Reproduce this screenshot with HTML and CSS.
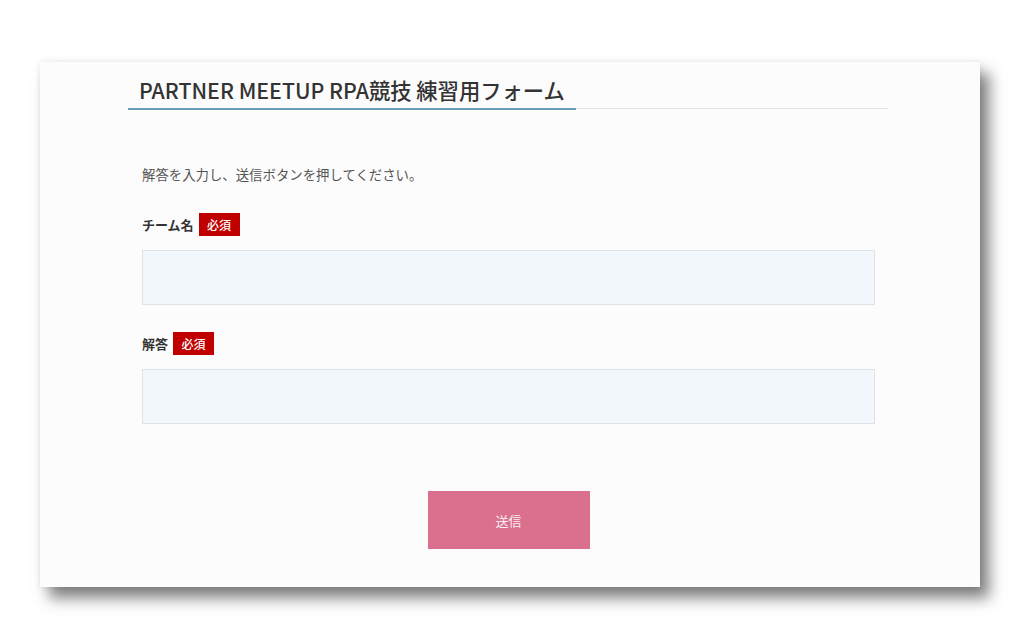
FILE: index.html
```html
<!DOCTYPE html>
<html lang="ja">
<head>
<meta charset="utf-8">
<title>PARTNER MEETUP RPA競技 練習用フォーム</title>
<link rel="stylesheet" href="styles.css">
</head>
<body>
<div class="page">
  <main class="panel">
    <header class="head">
      <h1 class="title">PARTNER MEETUP RPA競技 練習用フォーム</h1>
    </header>
    <form class="form">
      <p class="lead">解答を入力し、送信ボタンを押してください。</p>
      <div class="field">
        <label class="label">チーム名<span class="req">必須</span></label>
        <input class="input" type="text">
      </div>
      <div class="field second">
        <label class="label">解答<span class="req">必須</span></label>
        <input class="input" type="text">
      </div>
      <div class="actions">
        <button class="submit" type="button">送信</button>
      </div>
    </form>
  </main>
</div>
</body>
</html>
```
FILE: styles.css
```css
* { box-sizing: border-box; }
html, body { margin: 0; padding: 0; background: #ffffff; }
body {
  font-family: "Noto Sans CJK JP", "Noto Sans", sans-serif;
  color: #333;
}
.page {
  padding: 62px 0 49px 40px;
  min-height: 636px;
}
.panel {
  width: 940px;
  height: 525px;
  background: #fcfcfc;
  box-shadow: 0 0 6px rgba(0,0,0,0.08), 9px 11px 14px rgba(0,0,0,0.5);
  padding: 13px 92px 0 88px;
}
.head {
  display: flex;
  border-bottom: 1px solid #dde3e8;
  height: 34px;
}
.title {
  margin: 0 0 -1px 0;
  padding: 0 11px;
  font-size: 21.3px;
  line-height: 30px;
  font-weight: 500;
  color: #333;
  border-bottom: 2px solid #6a9fb9;
  height: 35px;
  letter-spacing: 0;
}
.form {
  padding: 0 13px 0 14px;
}
.lead {
  margin: 55px 0 0;
  font-size: 13.4px;
  line-height: 20px;
  color: #555;
}
.field { margin-top: 29px; }
.field.second { margin-top: 27px; }
.label {
  display: flex;
  align-items: center;
  height: 23px;
  font-size: 13px;
  font-weight: 700;
  color: #333;
}
.req {
  display: inline-flex;
  align-items: center;
  justify-content: center;
  margin-left: 5px;
  width: 41px;
  height: 23px;
  background: #c00000;
  color: #fff;
  font-size: 12px;
  font-weight: 500;
}
.input {
  display: block;
  margin-top: 14px;
  width: 733px;
  height: 55px;
  background: #f1f7fb;
  border: 1px solid #dde3e6;
  border-radius: 0;
  outline: none;
}
.actions {
  margin-top: 67px;
  display: flex;
  justify-content: center;
}
.submit {
  width: 162px;
  height: 58px;
  background: #da708e;
  border: none;
  color: #fbeef2;
  font-family: inherit;
  font-size: 13px;
}
```
